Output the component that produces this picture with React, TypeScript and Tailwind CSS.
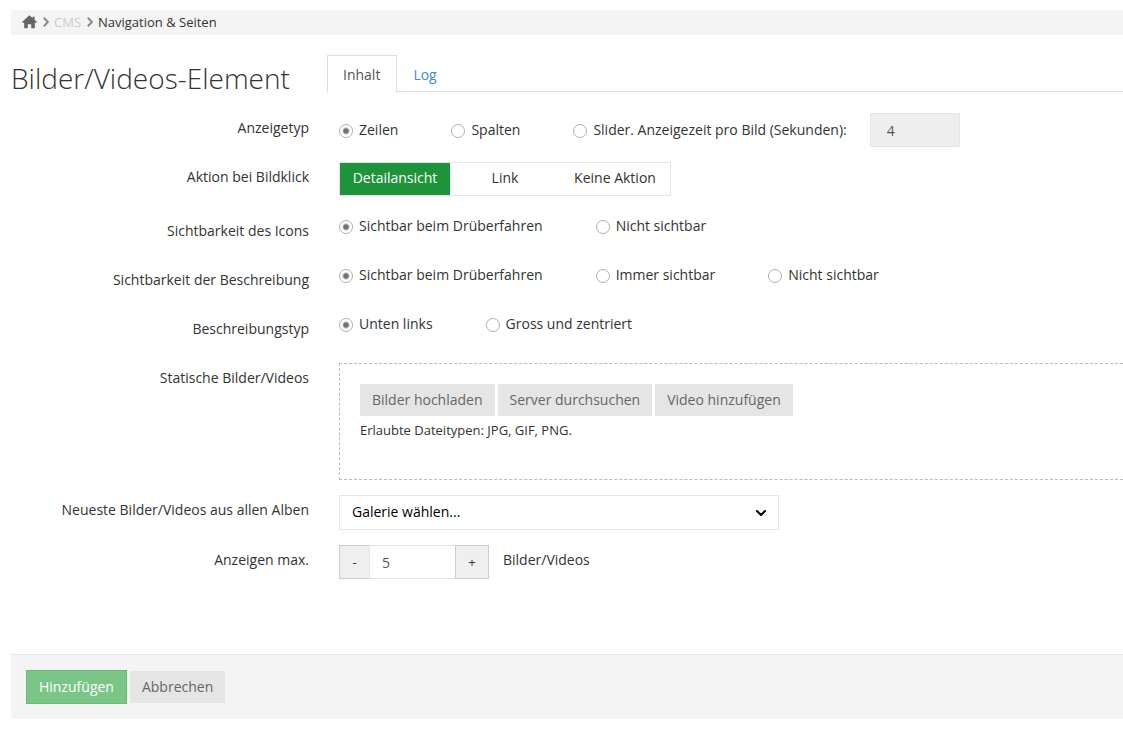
import { useState } from "react"
import type { ReactNode } from "react"
import { ChevronDown } from "lucide-react"

interface RowProps {
  label: string
  htmlFor?: string
  id?: string
  children: ReactNode
}

interface RadioOptionProps {
  name: string
  label: string
  checked: boolean
  onSelect: () => void
}

interface RadioGroupProps {
  name: string
  options: string[]
}

const actions = ["Detailansicht", "Link", "Keine Aktion"]

function HomeIcon() {
  return (
    <svg viewBox="0 0 15 14" className="h-3.5 w-[15px]" fill="currentColor" aria-hidden="true">
      <path d="M7.5 0.3 L10.6 3 V1.7 H12.6 V4.8 L15 7 L14.3 7.8 H12.8 V12.6 Q12.8 13.3 12.1 13.3 H9.2 V9.2 H5.8 V13.3 H2.9 Q2.2 13.3 2.2 12.6 V7.8 H0.7 L0 7 Z" />
    </svg>
  )
}

function Separator() {
  return (
    <svg
      viewBox="0 0 6 10"
      className="mr-[5px] ml-1.5 h-2.5 w-1.5 text-[#8a8a8a]"
      fill="none"
      stroke="currentColor"
      strokeWidth="2"
      aria-hidden="true"
    >
      <path d="M0.8 0.8 L4.9 5 L0.8 9.2" />
    </svg>
  )
}

function Row({ label, htmlFor, id, children }: RowProps) {
  return (
    <div className="flex gap-[30px]">
      <div className="w-[298px] shrink-0 pt-[5px] text-right">
        {htmlFor ? <label htmlFor={htmlFor}>{label}</label> : <span id={id}>{label}</span>}
      </div>
      <div className="min-w-0 flex-1">{children}</div>
    </div>
  )
}

function RadioOption({ name, label, checked, onSelect }: RadioOptionProps) {
  return (
    <label className="flex items-center gap-1.5 whitespace-nowrap">
      <input
        type="radio"
        name={name}
        checked={checked}
        onChange={onSelect}
        className="mt-px h-3.5 w-3.5 appearance-none rounded-full border border-[#b0b0b0] bg-white checked:bg-[radial-gradient(circle,#707070_2px,#ffffff_4px)]"
      />
      {label}
    </label>
  )
}

function RadioGroup({ name, options }: RadioGroupProps) {
  const [selected, setSelected] = useState(options[0])

  return (
    <div role="radiogroup" aria-labelledby={`${name}-label`} className="flex h-[34px] items-start gap-[53px]">
      {options.map((option) => (
        <RadioOption
          key={option}
          name={name}
          label={option}
          checked={selected === option}
          onSelect={() => setSelected(option)}
        />
      ))}
    </div>
  )
}

export default function App() {
  const [tab, setTab] = useState("Inhalt")
  const [displayType, setDisplayType] = useState("Zeilen")
  const [seconds, setSeconds] = useState("4")
  const [action, setAction] = useState("Detailansicht")
  const [max, setMax] = useState(5)

  return (
    <div className="min-h-screen bg-white pt-2.5 pl-[11px] font-['Open_Sans',sans-serif] text-sm/5 text-[#333333]">
      {/* Breadcrumb */}
      <nav className="flex h-[25px] items-center bg-[#f4f4f4] pb-0.5 pl-[11px] text-[13px]">
        <a href="#" aria-label="Home" className="text-[#666666]">
          <HomeIcon />
        </a>
        <Separator />
        <a href="#" className="text-[#cccccc]">CMS</a>
        <Separator />
        <a href="#" className="text-[#333333]">Navigation &amp; Seiten</a>
      </nav>

      {/* Title and tabs */}
      <header className="mt-5 flex">
        <h1 className="w-[316px] shrink-0 pt-1 text-[28px]/[38px] font-light whitespace-nowrap">
          Bilder/Videos-Element
        </h1>
        <div role="tablist" className="flex h-[37px] flex-1 border-b border-[#dddddd]">
          {["Inhalt", "Log"].map((name) => (
            <button
              key={name}
              type="button"
              role="tab"
              aria-selected={tab === name}
              onClick={() => setTab(name)}
              className={`mb-[-2px] h-[38px] border pt-0.5 pr-4 pl-[15px] ${
                tab === name
                  ? "border-[#dddddd] border-b-white bg-white text-[#555555]"
                  : "border-transparent text-[#428bca]"
              }`}
            >
              {name}
            </button>
          ))}
        </div>
      </header>

      <form onSubmit={(e) => e.preventDefault()}>
        <div className="mt-4 flex flex-col gap-[15px]">
          <Row label="Anzeigetyp" id="display-label">
            <div role="radiogroup" aria-labelledby="display-label" className="flex items-center gap-[53px]">
              <RadioOption
                name="display"
                label="Zeilen"
                checked={displayType === "Zeilen"}
                onSelect={() => setDisplayType("Zeilen")}
              />
              <RadioOption
                name="display"
                label="Spalten"
                checked={displayType === "Spalten"}
                onSelect={() => setDisplayType("Spalten")}
              />
              <div className="flex items-center gap-[23px]">
                <RadioOption
                  name="display"
                  label="Slider. Anzeigezeit pro Bild (Sekunden):"
                  checked={displayType === "Slider"}
                  onSelect={() => setDisplayType("Slider")}
                />
                <input
                  type="text"
                  aria-label="Anzeigezeit pro Bild"
                  value={seconds}
                  disabled={displayType !== "Slider"}
                  onChange={(e) => setSeconds(e.target.value)}
                  className="h-[34px] w-[90px] border border-[#e5e5e5] px-4 text-[#555555] disabled:bg-[#eeeeee]"
                />
              </div>
            </div>
          </Row>

          <Row label="Aktion bei Bildklick" id="action-label">
            <div
              role="group"
              aria-labelledby="action-label"
              className="inline-flex border border-[#e5e5e5] align-top"
            >
              {actions.map((name) => (
                <button
                  key={name}
                  type="button"
                  aria-pressed={action === name}
                  onClick={() => setAction(name)}
                  className={`h-8 w-[110px] pb-0.5 ${action === name ? "bg-[#1e943a] text-white" : "bg-white"}`}
                >
                  {name}
                </button>
              ))}
            </div>
          </Row>

          <div className="mt-[5px]">
            <Row label="Sichtbarkeit des Icons" id="icon-label">
              <RadioGroup name="icon" options={["Sichtbar beim Drüberfahren", "Nicht sichtbar"]} />
            </Row>
          </div>

          <Row label="Sichtbarkeit der Beschreibung" id="description-label">
            <RadioGroup
              name="description"
              options={["Sichtbar beim Drüberfahren", "Immer sichtbar", "Nicht sichtbar"]}
            />
          </Row>

          <Row label="Beschreibungstyp" id="placement-label">
            <RadioGroup name="placement" options={["Unten links", "Gross und zentriert"]} />
          </Row>

          <Row label="Statische Bilder/Videos">
            <div className="border border-r-0 border-dashed border-[#bbbbbb] px-5 pt-5 pb-[39px]">
              <div className="flex gap-[3px]">
                {["Bilder hochladen", "Server durchsuchen", "Video hinzufügen"].map((name) => (
                  <button key={name} type="button" className="h-8 bg-[#e5e5e5] px-3 text-[#666666]">
                    {name}
                  </button>
                ))}
              </div>
              <p className="pt-1 text-[13px]">Erlaubte Dateitypen: JPG, GIF, PNG.</p>
            </div>
          </Row>

          <Row label="Neueste Bilder/Videos aus allen Alben" htmlFor="gallery">
            <div className="grid w-[440px]">
              <select
                id="gallery"
                className="col-start-1 row-start-1 h-[35px] appearance-none border border-[#e5e5e5] bg-white px-3 pb-0.5 text-black"
              >
                <option>Galerie wählen...</option>
              </select>
              <ChevronDown
                strokeWidth={3}
                className="pointer-events-none col-start-1 row-start-1 mr-2.5 h-4 w-4 self-center justify-self-end text-black"
              />
            </div>
          </Row>

          <Row label="Anzeigen max." htmlFor="max">
            <div className="flex">
              <button
                type="button"
                aria-label="Weniger"
                onClick={() => setMax(Math.max(0, max - 1))}
                className="h-[34px] w-[30px] border border-r-0 border-[#cccccc] bg-[#efefef] text-[13px]"
              >
                -
              </button>
              <input
                id="max"
                type="text"
                value={max}
                onChange={(e) => setMax(Number(e.target.value) || 0)}
                className="h-[34px] w-[86px] border border-r-0 border-[#e5e5e5] px-3 text-[#555555]"
              />
              <button
                type="button"
                aria-label="Mehr"
                onClick={() => setMax(max + 1)}
                className="h-[34px] w-[34px] border border-[#cccccc] bg-[#efefef] text-[13px]"
              >
                +
              </button>
              <span className="pt-[5px] pl-3.5">Bilder/Videos</span>
            </div>
          </Row>
        </div>

        {/* Actions */}
        <footer className="mt-[75px] flex items-center gap-[3px] border-t border-[#e5e9ec] bg-[#f4f4f4] p-[15px]">
          <button type="submit" className="h-[34px] border border-[#6cb978] bg-[#7ac687] px-3 text-white">
            Hinzufügen
          </button>
          <button type="button" className="h-8 bg-[#e5e5e5] px-3 text-[#666666]">
            Abbrechen
          </button>
        </footer>
      </form>
    </div>
  )
}
